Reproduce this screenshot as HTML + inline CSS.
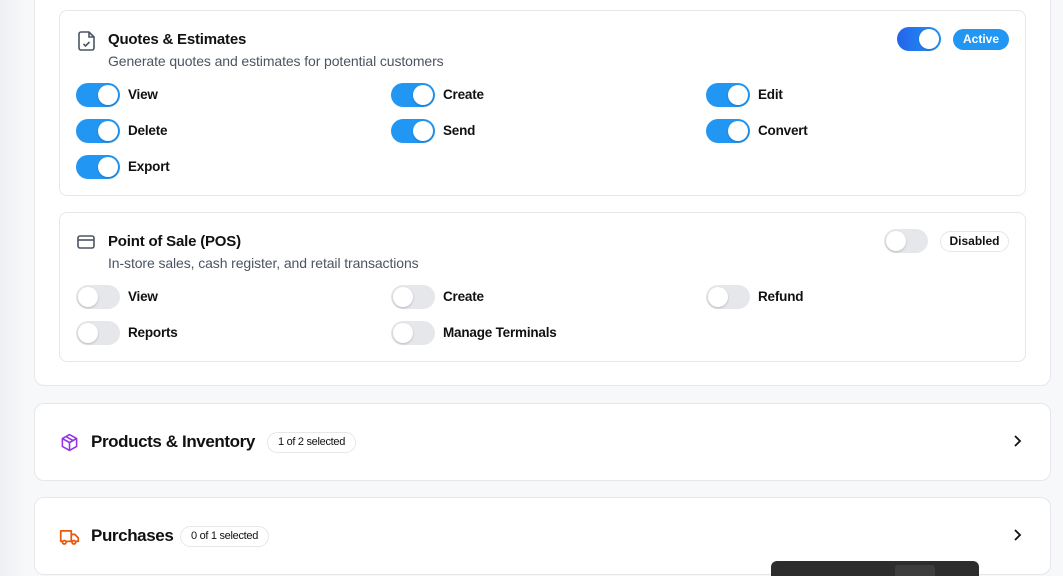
<!DOCTYPE html>
<html><head><style>
*{box-sizing:border-box;margin:0;padding:0}
html,body{width:1063px;height:576px;overflow:hidden}
body{background:#f7f8fa;font-family:"Liberation Sans",sans-serif;color:#111;position:relative}
.shade{position:absolute;left:0;top:0;width:24px;height:576px;background:linear-gradient(90deg,#eeeff2,#f7f8fa)}
.outer{position:absolute;left:34px;top:-20px;width:1017px;height:406px;background:#fff;border:1px solid #e5e7eb;border-radius:10px}
.card{position:absolute;left:59px;width:967px;background:#fff;border:1px solid #e5e7eb;border-radius:8px}
.tg{position:absolute;width:44px;height:24px;border-radius:12px;background:#2196f3}
.tg::after{content:"";position:absolute;top:2px;left:22px;width:20px;height:20px;border-radius:50%;background:#fff;box-shadow:0 1px 2px rgba(0,0,0,.2)}
.tg.off{background:#e5e7eb}
.tg.off::after{left:2px}
.tg.big{background:linear-gradient(90deg,#2563eb,#2196f3)}
.lb{position:absolute;font-size:13.5px;font-weight:bold;color:#111;line-height:24px;letter-spacing:-0.2px}
.title{position:absolute;left:108px;font-size:15px;font-weight:bold;letter-spacing:-0.2px}
.desc{position:absolute;left:108px;font-size:14px;color:#4b5563;letter-spacing:-0.1px}
.badge{position:absolute;font-size:12px;font-weight:bold;border-radius:11px;height:21px;line-height:21px;text-align:center}
.sec{position:absolute;left:34px;width:1017px;height:78px;background:#fff;border:1px solid #e5e7eb;border-radius:10px}
.sec .h{position:absolute;left:56px;top:28px;font-size:17px;font-weight:bold;letter-spacing:-0.4px}
.sec .pill{position:absolute;top:28px;height:21px;line-height:19px;border:1px solid #e5e7eb;border-radius:11px;font-size:11px;padding:0 10px;letter-spacing:-0.3px}
.sec .chev{position:absolute;right:28px;top:30px}
</style></head><body>
<div class="shade"></div>
<div class="outer"></div>

<div class="card" style="top:10px;height:186px"></div>
<svg style="position:absolute;left:78px;top:31px" width="18" height="20" viewBox="0 0 18 20" fill="none" stroke="#4b5563" stroke-width="1.6"><path d="M3 1h8l5 5v11a2 2 0 0 1-2 2H3a2 2 0 0 1-2-2V3a2 2 0 0 1 2-2z"/><path d="M11 1v5h5"/><path d="M5.5 13l2 2 4-4"/></svg>
<div class="title" style="top:31px">Quotes &amp; Estimates</div>
<div class="desc" style="top:53px">Generate quotes and estimates for potential customers</div>
<div class="tg big" style="left:897px;top:27px"></div>
<div class="badge" style="left:953px;top:29px;width:56px;background:#2196f3;color:#fff">Active</div>

<div class="tg" style="left:76px;top:83px"></div><div class="lb" style="left:128px;top:83px">View</div>
<div class="tg" style="left:391px;top:83px"></div><div class="lb" style="left:443px;top:83px">Create</div>
<div class="tg" style="left:706px;top:83px"></div><div class="lb" style="left:758px;top:83px">Edit</div>
<div class="tg" style="left:76px;top:119px"></div><div class="lb" style="left:128px;top:119px">Delete</div>
<div class="tg" style="left:391px;top:119px"></div><div class="lb" style="left:443px;top:119px">Send</div>
<div class="tg" style="left:706px;top:119px"></div><div class="lb" style="left:758px;top:119px">Convert</div>
<div class="tg" style="left:76px;top:155px"></div><div class="lb" style="left:128px;top:155px">Export</div>

<div class="card" style="top:212px;height:150px"></div>
<svg style="position:absolute;left:77px;top:235px" width="18" height="14" viewBox="0 0 18 14" fill="none" stroke="#4b5563" stroke-width="1.6"><rect x="1" y="1" width="16" height="12" rx="2"/><path d="M1 5h16"/></svg>
<div class="title" style="top:233px">Point of Sale (POS)</div>
<div class="desc" style="top:255px">In-store sales, cash register, and retail transactions</div>
<div class="tg off" style="left:884px;top:229px"></div>
<div class="badge" style="left:940px;top:231px;width:69px;border:1px solid #e5e7eb;color:#111;line-height:19px">Disabled</div>

<div class="tg off" style="left:76px;top:285px"></div><div class="lb" style="left:128px;top:285px">View</div>
<div class="tg off" style="left:391px;top:285px"></div><div class="lb" style="left:443px;top:285px">Create</div>
<div class="tg off" style="left:706px;top:285px"></div><div class="lb" style="left:758px;top:285px">Refund</div>
<div class="tg off" style="left:76px;top:321px"></div><div class="lb" style="left:128px;top:321px">Reports</div>
<div class="tg off" style="left:391px;top:321px"></div><div class="lb" style="left:443px;top:321px">Manage Terminals</div>

<div class="sec" style="top:403px">
<svg style="position:absolute;left:25px;top:29px" width="19" height="19" viewBox="0 0 24 24" fill="none" stroke="#9333ea" stroke-width="2" stroke-linejoin="round"><path d="M12 2l9 5v10l-9 5-9-5V7z"/><path d="M3 7l9 5 9-5M12 12v10M7.5 4.5l9 5"/></svg>
<div class="h">Products &amp; Inventory</div>
<div class="pill" style="left:232px">1 of 2 selected</div>
<svg class="chev" width="10" height="14" viewBox="0 0 10 14" fill="none" stroke="#111" stroke-width="1.8"><path d="M3 2l5 5-5 5"/></svg>
</div>

<div class="sec" style="top:497px">
<svg style="position:absolute;left:24px;top:30px" width="21" height="18" viewBox="0 0 24 20" fill="none" stroke="#ea580c" stroke-width="2" stroke-linejoin="round"><path d="M2 3h12v12H2zM14 7h4l4 4v4h-8"/><circle cx="6" cy="16" r="2" fill="#fff"/><circle cx="17" cy="16" r="2" fill="#fff"/></svg>
<div class="h">Purchases</div>
<div class="pill" style="left:145px">0 of 1 selected</div>
<svg class="chev" width="10" height="14" viewBox="0 0 10 14" fill="none" stroke="#111" stroke-width="1.8"><path d="M3 2l5 5-5 5"/></svg>
</div>

<div style="position:absolute;left:771px;top:561px;width:208px;height:15px;background:#2d2d2d;border-radius:6px 6px 0 0"></div>
<div style="position:absolute;left:895px;top:565px;width:40px;height:11px;background:#3d3d3d;border-radius:3px 3px 0 0"></div>
</body></html>
